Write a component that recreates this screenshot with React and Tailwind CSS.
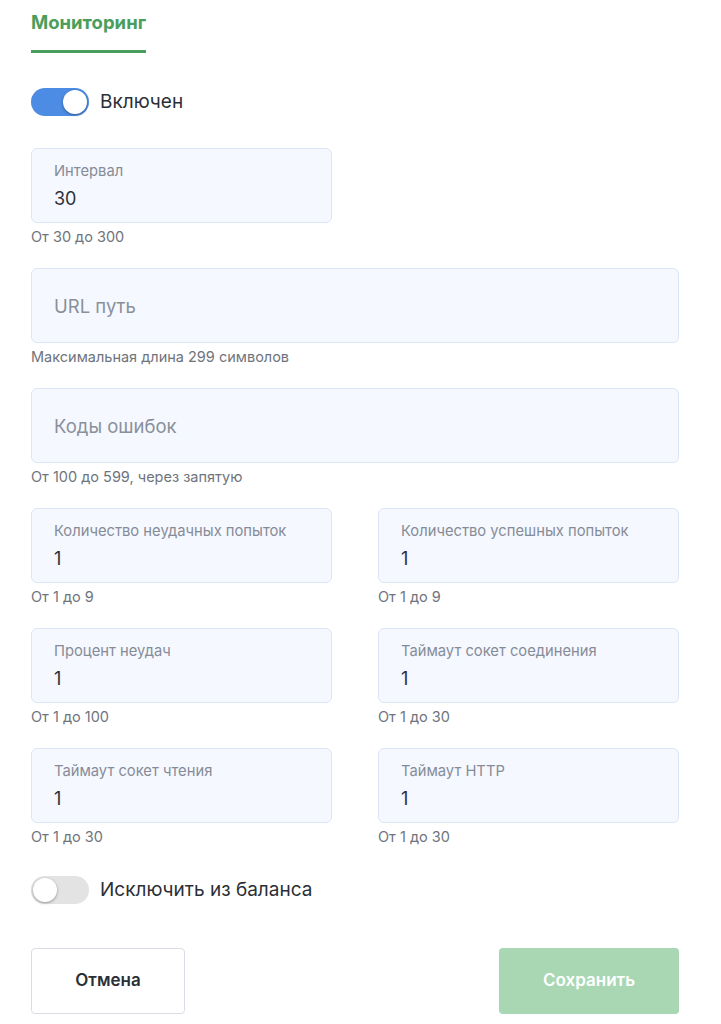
import React from "react";

function Toggle({ on }) {
  return (
    <div
      className={
        "relative w-[58px] h-[28px] rounded-full shrink-0 " +
        (on ? "bg-[#4c8ce4]" : "bg-[#e3e3e3]")
      }
    >
      <div
        className={
          "absolute top-[2px] w-[24px] h-[24px] rounded-full bg-white shadow-[0_1px_3px_rgba(0,0,0,0.35)] " +
          (on ? "left-[32px]" : "left-[2px]")
        }
      />
    </div>
  );
}

function Field({ label, value, placeholder, helper }) {
  return (
    <div className="flex flex-col">
      <div className="h-[75px] rounded-[6px] border border-[#dce5f7] bg-[#f5f8ff] px-[22px] flex flex-col justify-center">
        {label ? (
          <>
            <div className="text-[14.75px] leading-[20px] text-[#868c97]">{label}</div>
            <div className="mt-[6px] text-[18px] leading-[24px] text-[#2c313b]">{value}</div>
          </>
        ) : (
          <div className="text-[18.5px] leading-[24px] text-[#8a909a]">{placeholder}</div>
        )}
      </div>
      <div className="mt-[5px] text-[14.5px] leading-[18px] text-[#6f747c]">{helper}</div>
    </div>
  );
}

export default function App() {
  return (
    <div
      className="w-[721px] h-[1024px] bg-white px-[31px] overflow-hidden"
      style={{ fontFamily: "Inter, 'Noto Sans', sans-serif" }}
    >
      <div className="w-[648px]">
        <div className="inline-block pt-[10px] pb-[16px] border-b-[3px] border-[#4a9e5c] text-[18.5px] leading-[24px] font-bold text-[#4a9e5c]">
          Мониторинг
        </div>

        <div className="mt-[35px] flex items-center gap-[11px]">
          <Toggle on />
          <span className="text-[19px] leading-[24px] text-[#2b2f36]">Включен</span>
        </div>

        <div className="mt-[32px] flex flex-col gap-[22px]">
          <div className="w-[301px]">
            <Field label="Интервал" value="30" helper="От 30 до 300" />
          </div>
          <Field placeholder="URL путь" helper="Максимальная длина 299 символов" />
          <Field placeholder="Коды ошибок" helper="От 100 до 599, через запятую" />
          <div className="grid grid-cols-2 gap-x-[46px] gap-y-[22px]">
            <Field label="Количество неудачных попыток" value="1" helper="От 1 до 9" />
            <Field label="Количество успешных попыток" value="1" helper="От 1 до 9" />
            <Field label="Процент неудач" value="1" helper="От 1 до 100" />
            <Field label="Таймаут сокет соединения" value="1" helper="От 1 до 30" />
            <Field label="Таймаут сокет чтения" value="1" helper="От 1 до 30" />
            <Field label="Таймаут HTTP" value="1" helper="От 1 до 30" />
          </div>
        </div>

        <div className="mt-[30px] flex items-center gap-[11px]">
          <Toggle on={false} />
          <span className="text-[19px] leading-[24px] text-[#2b2f36]">Исключить из баланса</span>
        </div>

        <div className="mt-[44px] flex justify-between">
          <button className="w-[154px] h-[66px] rounded-[4px] border border-[#d9dde3] bg-white text-[17px] font-semibold text-[#2b2f36]">
            Отмена
          </button>
          <button className="w-[180px] h-[66px] rounded-[4px] bg-[#a9d7b4] text-[17px] font-semibold text-white">
            Сохранить
          </button>
        </div>
      </div>
    </div>
  );
}
